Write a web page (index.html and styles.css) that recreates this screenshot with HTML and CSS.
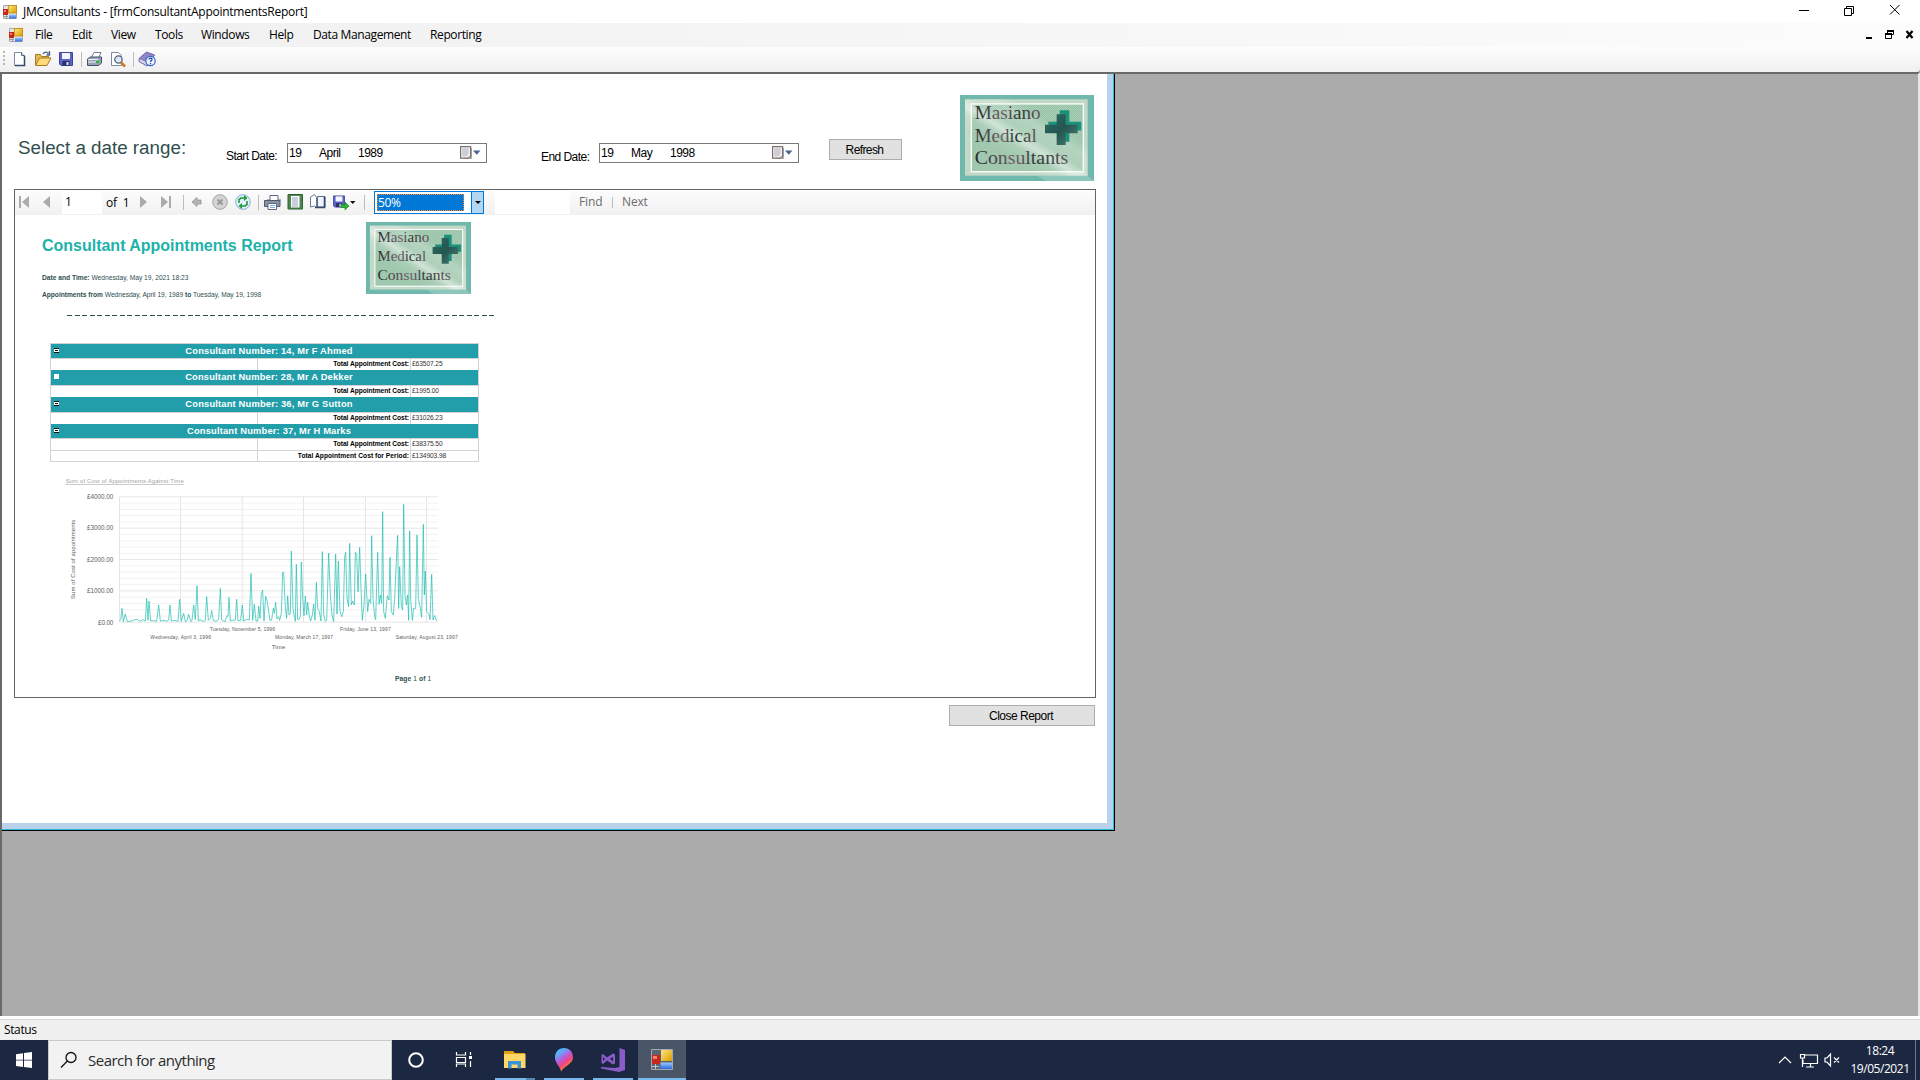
FILE: index.html
```html
<!DOCTYPE html>
<html lang="en">
<head>
<meta charset="utf-8">
<title>JMConsultants</title>
<link rel="stylesheet" href="styles.css">
</head>
<body>
<svg class="defs" width="0" height="0" aria-hidden="true">
  <defs>
    <linearGradient id="gGold" x1="0" y1="0" x2="1" y2="1"><stop offset="0" stop-color="#ffe680"/><stop offset="1" stop-color="#dc9c00"/></linearGradient>
    <linearGradient id="gBlue" x1="0" y1="0" x2="0" y2="1"><stop offset="0" stop-color="#9cc8ff"/><stop offset="1" stop-color="#2a6ce0"/></linearGradient>
    <linearGradient id="gShine" x1="0" y1="1" x2="1" y2="0"><stop offset=".3" stop-color="#fff" stop-opacity="0"/><stop offset=".4" stop-color="#fff" stop-opacity=".12"/><stop offset=".46" stop-color="#fff" stop-opacity=".5"/><stop offset=".53" stop-color="#fff" stop-opacity=".15"/><stop offset=".62" stop-color="#fff" stop-opacity=".22"/><stop offset=".7" stop-color="#fff" stop-opacity="0"/></linearGradient>
    <linearGradient id="gText" x1="0" y1="0" x2="1" y2="0"><stop offset="0" stop-color="#262a2a"/><stop offset=".45" stop-color="#75636f"/><stop offset=".65" stop-color="#2d3434"/><stop offset="1" stop-color="#64585f"/></linearGradient>
    <linearGradient id="gCross" x1="0" y1="0" x2="1" y2="1"><stop offset="0" stop-color="#2f6d66"/><stop offset=".5" stop-color="#245650"/><stop offset="1" stop-color="#4c7f76"/></linearGradient>
    <pattern id="pDots" width="6" height="6" patternUnits="userSpaceOnUse"><rect width="6" height="6" fill="#add0b8"/><path d="M0 0h3v3H0zM3 3h3v3H3z" fill="#93c0a4"/></pattern>
    <linearGradient id="gPaint" x1="0" y1="0" x2=".6" y2="1"><stop offset="0" stop-color="#1fd3f4"/><stop offset=".3" stop-color="#6aa2f5"/><stop offset=".5" stop-color="#b55fe0"/><stop offset=".72" stop-color="#f0457d"/><stop offset="1" stop-color="#ffb400"/></linearGradient>
    <symbol id="form" viewBox="0 0 14 14">
      <path d="M.5.5h13v13H.5z" fill="#e4e4e4" stroke="#a8a8a8"/><path d="M3.500 10v4M0 11.500h5" stroke="#999"/>
      <rect y="4" width="5" height="6" fill="#c8281c"/><rect x="1" y="5" width="2" height="2" fill="#f08070"/>
      <rect x="5.500" y=".5" width="8" height="7.500" fill="url(#gGold)" stroke="#c08a10" stroke-width=".8"/>
      <rect x="6" y="9.500" width="7" height="4" fill="url(#gBlue)"/>
    </symbol>
    <symbol id="formLarge" viewBox="0 0 22 21" preserveAspectRatio="none">
      <path d="M.5.5h21v20H.5z" fill="#5a6474" stroke="#a3a8b0"/><path d="M4.500 15v5M1 17.500h7" stroke="#c0c4ca"/>
      <rect x="1" y="6" width="8" height="9" fill="#c8281c"/><rect x="2" y="7" width="4" height="3" fill="#f08070"/>
      <rect x="10" y="1" width="11" height="11" fill="url(#gGold)"/>
      <rect x="9.500" y="13.500" width="11.500" height="6.500" fill="url(#gBlue)"/>
    </symbol>
    <symbol id="floppy" viewBox="0 0 14 14">
      <path d="M.5.5h13v13H2l-1.500-1.500z" fill="#5b62c8" stroke="#3d449c"/><rect x="3" y="1" width="8" height="6" fill="#f4f6ff"/><rect x="3.500" y="9" width="7" height="4.500" fill="#2b2f68"/><rect x="7.500" y="10" width="2" height="3" fill="#dfe4ff"/>
    </symbol>
    <symbol id="logo" viewBox="0 0 402 260" preserveAspectRatio="none">
      <rect width="402" height="260" fill="#70b8ac"/>
      <rect x="15" y="13" width="368" height="231" fill="#c3d9c8"/>
      <rect x="34" y="27" width="336" height="205" fill="url(#pDots)"/>
      <path d="M15 13h368v231H15z" fill="url(#gShine)"/>
      <path d="M230 244h153l19 16H260z" fill="#fff" fill-opacity=".2"/>
      <rect x="34" y="27" width="336" height="205" fill="none" stroke="#fbfffc" stroke-width="4"/>
      <path d="M299 46h29v35h36v26h-36v34h-29v-34h-34V81h34z" fill="#1c9179"/>
      <path d="M290 58h27v32h36v26h-36v35h-27v-35h-35V90h35z" fill="url(#gCross)"/>
      <g font-family="'Liberation Serif',serif" font-size="55" fill="url(#gText)">
        <text x="44" y="72" textLength="198" lengthAdjust="spacingAndGlyphs">Masiano</text>
        <text x="44" y="142" textLength="186" lengthAdjust="spacingAndGlyphs">Medical</text>
        <text x="44" y="208" textLength="281" lengthAdjust="spacingAndGlyphs">Consultants</text>
      </g>
    </symbol>
    <symbol id="calendar" viewBox="0 0 21 14">
      <path d="M2 2h10v11H4z" fill="#aaa"/><path d="M.6.600h10v9.500l-2 2h-8z" fill="#f5f2f2" stroke="#7b706f" stroke-width="1.200"/>
      <path d="M2.500 3h6.500M2.500 5h6.500M2.500 7h6.500M2.500 9h5M3 2.500v8M5 2.500v8M7 2.500v8" stroke="#aeb6c4" stroke-width=".7"/>
      <path d="M13 4.500h7.500L16.700 8.700z" fill="#48648f"/>
    </symbol>
  </defs>
</svg>

<div class="app">
  <header class="titlebar">
    <svg class="ico14"><use href="#form"/></svg>
    <span class="app-title">JMConsultants - [frmConsultantAppointmentsReport]</span>
    <svg class="window-buttons" width="104" height="14" fill="none" stroke="#000"><path d="M1 6.500h10M46.500 4.500h7v7h-7zM48.500 4v-1.500h7v7H54M92 1l9.500 9.500M101.500 1L92 10.500"/></svg>
  </header>

  <nav class="menubar">
    <svg class="ico14"><use href="#form"/></svg>
    <span class="m-file">File</span><span class="m-edit">Edit</span><span class="m-view">View</span><span class="m-tools">Tools</span><span class="m-windows">Windows</span><span class="m-help">Help</span><span class="m-data">Data Management</span><span class="m-reporting">Reporting</span>
    <svg class="child-buttons" width="48" height="12"><path d="M0 8h6v2H0z"/><path d="M21.500 1.500h6v4h-6zM19.500 5.500h6v4h-6z" fill="#fbfbfb" stroke="#000"/><path d="M21 1h7v2h-7zM19 4h7v2h-7z"/><path d="M40.500 2l6 7M46.500 2l-6 7" stroke="#000" stroke-width="2.200"/></svg>
  </nav>

  <div class="toolbar">
    <svg width="160" height="24">
      <path d="M3 4h2v2H3zM3 8h2v2H3zM3 12h2v2H3zM3 16h2v2H3z" fill="#b8b8b8"/>
      <path d="M14.500 5.500h7l3 3v10h-10z" fill="#fff" stroke="#7c8aa6"/><path d="M24.500 9v9.500H15" stroke="#34496f" stroke-width="1.500" fill="none"/><path d="M21.500 5.500v3h3" fill="#dfe8f5" stroke="#50658a"/>
      <path d="M35.500 18V7.500h5l1 2h7V12" fill="#e5bb55" stroke="#a57b28"/><path d="M35.500 18.500l4-7.500h11.500l-4 7.500z" fill="#ffda78" stroke="#a57b28"/><path d="M43 7c1-2.500 4-2.500 5.500-.5M49.500 4v4h-3" stroke="#475f82" fill="none" stroke-width="1.300"/>
      <svg x="59" y="5" width="14" height="14"><use href="#floppy"/></svg>
      <path d="M81.500 5v15M133.500 5v15" stroke="#bdbdbd"/>
      <path d="M91 11l3-5.500h7L98.500 11z" fill="#fff" stroke="#7080a0"/><path d="M87.500 12l3-2h11v6l-3 2.500h-11z" fill="#98a4b6" stroke="#43506a"/><path d="M88 12.500h10M88 15h10" stroke="#edf1f6"/><rect x="96" y="14" width="3" height="2" fill="#1fc02f"/>
      <path d="M111.500 5.500h7l3 3v10h-10z" fill="#fff" stroke="#7c8aa6"/><circle cx="118.500" cy="12.500" r="3.700" fill="#d8e6f7" fill-opacity=".9" stroke="#54647e" stroke-width="1.300"/><path d="M121 15.500l4 4" stroke="#d07a22" stroke-width="2.600"/>
      <path d="M139 11.500l7.500-6.500 8 3-6 8.500z" fill="#8e88c8" stroke="#6a66a8"/><path d="M139 12v2.500l8 4.500 2-3" fill="#d9d7ee" stroke="#6a66a8"/><circle cx="150.500" cy="14" r="4.700" fill="#eaf1ff" stroke="#3d67c4" stroke-width="1.200"/><path d="M149 12.500c.2-1.800 3.200-1.600 3 0-.2 1.100-1.500 1-1.500 2.500M150.500 16v1.200" stroke="#2448a0" stroke-width="1.300" fill="none"/>
    </svg>
  </div>

  <main class="mdi">
    <section class="child">
      <div class="filters">
        <h2>Select a date range:</h2>
        <label class="start-label">Start Date:</label>
        <div class="picker start-picker"><span class="day">19</span><span class="month">April</span><span class="year">1989</span><svg width="21" height="14"><use href="#calendar"/></svg></div>
        <label class="end-label">End Date:</label>
        <div class="picker end-picker"><span class="day">19</span><span class="month">May</span><span class="year">1998</span><svg width="21" height="14"><use href="#calendar"/></svg></div>
        <button class="btn refresh">Refresh</button>
        <svg class="logo-big"><use href="#logo"/></svg>
      </div>

      <div class="viewer">
        <div class="viewer-bar">
          <svg width="47" height="25" fill="#ababab"><path d="M4 6h2v12H4zM14 6v12l-7-6zM35 6v12l-7-6z"/></svg>
          <span class="page-box">1</span>
          <span class="page-of">of&nbsp; 1</span>
          <svg class="bar-icons" width="233" height="25">
            <path d="M14 6v12l7-6zM35 6v12l7-6zM43 6h2v12h-2z" fill="#ababab"/>
            <path d="M57.500 5v15M132.500 5v15M238.500 5v15" stroke="#bdbdbd"/>
            <path d="M66 12l5-4.500v2.500h4v4h-4v2.500z" fill="#b5b5b5" stroke="#929292" stroke-width=".8"/>
            <circle cx="94" cy="12" r="7.300" fill="#d4d4d4" stroke="#a4a4a4"/><path d="M91.500 9.500l5 5M96.500 9.500l-5 5" stroke="#999" stroke-width="2"/>
            <circle cx="117" cy="12" r="7.300" fill="#e4f2ff" stroke="#86aedb"/><path d="M113 13V9.500l2-1.500h4M121 11v3.500l-2 1.500h-4" fill="none" stroke="#219a33" stroke-width="1.600"/><path d="M118 5l3.500 3-3.500 3zM116 13l-3.500 3 3.500 3z" fill="#219a33"/>
            <path d="M141 10h3V5.500h8V10h3" fill="#fff" stroke="#5b6a82"/><path d="M138.500 10.500h15.500v6h-15.500z" fill="#8a93a3" stroke="#505b6d"/><path d="M142 13.500h8.500v6H142z" fill="#fff" stroke="#5b6a82"/><path d="M144 15.500h5M144 17.500h5" stroke="#79afe6"/>
            <path d="M162 4.500h14.500v14.500H162z" fill="#4e8751" stroke="#2d6332"/><path d="M165 6h8.500v11.500H165z" fill="#fff"/><path d="M166 8h6M166 10h6M166 12h6M166 14h6M166 16h6" stroke="#7a88a8" stroke-width=".8"/>
            <path d="M184.500 7l4-2.500 2 3v10l-2-1.500-4 1z" fill="#fff" stroke="#6d7b94"/><path d="M191.500 6.500h7.500v10.500h-7.500z" fill="#eef4ff" stroke="#5b6a82"/><path d="M198.500 7v10.500H189" stroke="#35496d" stroke-width="1.600" fill="none"/>
            <svg x="207" y="5" width="12" height="13"><use href="#floppy"/></svg><path d="M215 14.500h4V12l4 4-4 4v-2.500h-4z" fill="#2cb52e" stroke="#188020" stroke-width=".6"/>
            <path d="M224 11h5.500l-2.750 3z" fill="#111"/>
          </svg>
          <div class="zoom-box"><span class="zoom-value">50%</span><span class="zoom-drop"></span></div>
          <span class="find-box"></span>
          <span class="find">Find</span><span class="find-sep"></span><span class="next">Next</span>
        </div>

        <article class="report">
          <div class="report-head">
            <div class="report-info">
              <h1>Consultant Appointments Report</h1>
              <p class="date-line"><b>Date and Time:</b> Wednesday, May 19, 2021 18:23</p>
              <p class="range-line"><b>Appointments from</b> Wednesday, April 19, 1989 <b>to</b> Tuesday, May 19, 1998</p>
            </div>
            <svg class="logo-small"><use href="#logo"/></svg>
          </div>
          <svg class="dashes" width="428" height="1"><path d="M0 .5h428" stroke="#2f4f4f" stroke-dasharray="5 2.540" shape-rendering="crispEdges"/></svg>
          <div class="costs">
            <div class="group g1"><i class="toggle"></i>Consultant Number: 14, Mr F Ahmed</div>
            <div class="row"><span></span><b>Total Appointment Cost:</b><em>£63507.25</em></div>
            <div class="group g2"><i class="toggle blank"></i>Consultant Number: 28, Mr A Dekker</div>
            <div class="row"><span></span><b>Total Appointment Cost:</b><em>£1995.00</em></div>
            <div class="group g3"><i class="toggle"></i>Consultant Number: 36, Mr G Sutton</div>
            <div class="row"><span></span><b>Total Appointment Cost:</b><em>£31026.23</em></div>
            <div class="group g4"><i class="toggle"></i>Consultant Number: 37, Mr H Marks</div>
            <div class="row"><span></span><b>Total Appointment Cost:</b><em>£38375.50</em></div>
            <div class="row total"><span></span><b>Total Appointment Cost for Period:</b><em>£134903.98</em></div>
          </div>
          <svg class="chart" viewBox="0 0 1290 600" width="430" height="200">
            <path class="minor" d="M238 114.500h956M238 133.500h956M238 152h956M238 171h956M238 208.500h956M238 227.500h956M238 246h956M238 265h956M238 302.500h956M238 321h956M238 340h956M238 359h956M238 396.500h956M238 415.500h956M238 434h956M238 453h956"/>
            <path class="major" d="M238 95.500h956M238 189.500h956M238 283.500h956M238 377.500h956M238 471.500h956M238.500 95v376M421.500 95v376M606.500 95v376M790.500 95v376M976.500 95v376M1159.500 95v376"/>
            <polyline class="series" points="238,468 242,464 246,430 250,470 256,447 262,470 275,468 285,464 292,463 300,469 308,464 316,468 320,400 324,466 327,408 332,468 340,467 350,469 356,420 361,468 372,466 380,469 386,465 390,420 394,468 402,466 414,469 419,403 424,469 431,445 436,470 441,467 446,448 452,470 456,466 461,420 466,464 471,362 475,468 480,464 490,469 496,466 500,395 505,466 511,460 515,436 520,466 528,469 536,463 541,370 545,465 555,470 561,452 564,454 567,397 571,468 580,465 586,466 590,403 594,467 602,466 607,420 611,468 620,463 628,465 633,325 638,466 643,418 648,468 653,468 656,424 660,460 664,385 668,376 672,468 677,394 681,405 686,440 690,466 695,465 700,430 703,445 707,412 711,462 716,455 719,466 724,445 728,322 731,322 736,430 740,460 743,392 747,450 751,445 754,258 759,430 763,455 766,469 769,298 773,464 778,462 781,455 784,291 788,400 792,452 796,393 800,450 803,412 808,455 812,468 817,450 821,417 825,466 829,352 833,430 838,440 843,468 847,260 851,450 856,469 860,465 866,264 871,390 876,450 881,470 887,267 891,447 895,288 900,440 905,455 910,440 914,275 917,262 921,400 926,425 929,235 934,420 938,408 943,420 946,262 950,268 954,380 959,247 963,370 967,466 972,420 977,327 983,440 987,403 992,415 995,212 999,400 1004,455 1007,464 1013,262 1017,418 1021,390 1025,415 1028,140 1031,440 1036,460 1042,392 1047,405 1050,277 1054,440 1060,450 1064,400 1071,245 1073,211 1076,430 1079,305 1084,425 1088,435 1091,118 1095,390 1099,420 1103,390 1106,466 1109,198 1112,400 1117,466 1121,430 1127,430 1131,210 1135,400 1141,430 1145,457 1150,178 1153,390 1156,318 1160,440 1166,445 1170,464 1175,328 1179,465 1184,452 1189,466 1192,464"/>
            <text class="chart-title" x="77" y="55" textLength="354">Sum of Cost of Appointments Against Time</text>
            <path d="M77 58.500h354" stroke="#b0b0b0" stroke-width="2"/>
            <g class="y-labels"><text x="141" y="102" textLength="79">£4000.00</text><text x="141" y="196" textLength="79">£3000.00</text><text x="141" y="290" textLength="79">£2000.00</text><text x="141" y="384" textLength="79">£1000.00</text><text x="174" y="479" textLength="46">£0.00</text></g>
            <text class="axis" transform="translate(105 402) rotate(-90)" textLength="238">Sum of Cost of appointments</text>
            <g class="x-labels"><text x="331" y="521" textLength="182">Wednesday, April 3, 1996</text><text x="509" y="497" textLength="196">Tuesday, November 5, 1996</text><text x="705" y="521" textLength="174">Monday, March 17, 1997</text><text x="900" y="497" textLength="152">Friday, June 13, 1997</text><text x="1067" y="521" textLength="186">Saturday, August 23, 1997</text></g>
            <text class="axis" x="695" y="553" textLength="41">Time</text>
          </svg>
          <p class="page-no"><b>Page</b> 1 <b>of</b> 1</p>
        </article>
      </div>
      <button class="btn close-report">Close Report</button>
    </section>
  </main>

  <div class="statusbar">Status</div>

  <footer class="taskbar">
    <svg class="start" width="48" height="40" fill="#fff"><path d="M16 14.300l7-1v6.400h-7zM24 13.100l8-1.100v7.700h-8zM16 20.600h7v6.300l-7-1zM24 20.600h8V28l-8-1.100z"/></svg>
    <div class="search"><svg width="18" height="18" fill="none" stroke="#111" stroke-width="1.300"><circle cx="11" cy="6.500" r="5"/><path d="M7.400 10L1 16.500"/></svg><span>Search for anything</span></div>
    <svg class="tasks" width="300" height="40">
      <circle cx="24" cy="20" r="6.800" fill="none" stroke="#fff" stroke-width="2"/>
      <path d="M64.500 12v3h9v-3M64.500 27v-3h9v3M64.500 17.500h9v5h-9zM78.500 12v3M78.500 21v6" fill="none" stroke="#fff" stroke-width="1.200"/><path d="M77 16h3v3h-3z" fill="#fff"/>
      <path d="M112 11h9l2 2h10v15h-21z" fill="#e3a112"/><path d="M112 14h21.500v14H112z" fill="#ffd766"/><path d="M116 28.500v-7.500h13v7.500h-3.500v-4h-6v4z" fill="#3994d6"/>
      <path d="M169 31.500c-.5-5-6-8-6-14C163 12 166.500 8 172 8s9 4 9 9.500c0 6-8.500 8.500-12 14z" fill="url(#gPaint)"/>
      <path d="M227.500 8l5.500 2v20l-6 2-18-3.500v-1.500l14 1 4.500-1z" fill="#8a5cc8"/><path d="M211 14l4 3.500 6-4 2 1v9l-2 1-6-4-4 3.500-1.500-1v-8zM211 17v4l2-2zM221 16.800v4.400l-3-2.200z" fill="#8a5cc8" fill-rule="evenodd"/>
      <rect x="246" width="48" height="40" fill="#4a5567"/><svg x="259" y="9" width="22" height="21"><use href="#formLarge"/></svg>
      <path d="M103 38h31v2h-31zM152 38h40v2h-40zM201 38h40v2h-40zM246 38h48v2h-48z" fill="#76b9ed"/><path d="M134 38h9v2h-9z" fill="#5788b2"/>
    </svg>
    <svg class="tray" width="68" height="20" fill="none" stroke="#fff" stroke-width="1.200"><path d="M2 13l6-6 6 6M28 5h12.500v8.500H26V10M33.500 14v3M29 17h8M23.500 4.500h4v3.500h-4zM25.500 8v9M48 8h2l3.500-4v12L50 12h-2zM57 7.500l5 5M62 7.500l-5 5"/></svg>
    <div class="clock"><span class="time">18:24</span><span class="date">19/05/2021</span></div>
    <i class="show-desktop"></i>
  </footer>
</div>
</body>
</html>
```
FILE: styles.css
```css
* { box-sizing: border-box; }
body { margin: 0; background: #ababab; font-family: "Open Sans", "Noto Sans", sans-serif; font-size: 12px; color: #000; }
h1, h2, p { margin: 0; font-weight: normal; }
svg { display: block; flex: none; }
span, label, b, em { white-space: nowrap; }
.defs { position: absolute; }
.ico14 { width: 14px; height: 14px; }

.app { width: 1920px; height: 1080px; display: flex; flex-direction: column; overflow: hidden; }

.titlebar { height: 23px; background: #fff; display: flex; align-items: center; padding: 0 20px 0 3px; }
.app-title { margin-left: 6px; letter-spacing: -.25px; line-height: 23px; }
.window-buttons { margin: -2px -2px 0 auto; }

.menubar { height: 24px; background: linear-gradient(90deg, #f0f0f0, #fcfcfc); display: flex; align-items: center; padding: 0 7px 0 9px; letter-spacing: -.38px; line-height: 24px; }
.m-file { margin-left: 12px; width: 37px; }
.m-edit { width: 39px; }
.m-view { width: 44px; }
.m-tools { width: 46px; }
.m-windows { width: 68px; }
.m-help { width: 44px; }
.m-data { width: 117px; }
.child-buttons { margin-left: auto; margin-right: -1px; }

.toolbar { height: 25px; background: linear-gradient(#fdfdfd, #f0f0f0); border-radius: 0 0 4px 0; }

.mdi { flex: none; height: 944px; background: #ababab; border-style: solid; border-color: #696969 #e8e8e8 #ababab #696969; border-width: 2px 2px 0 2px; }
.child { width: 1113px; height: 757px; background: #fff; border-style: solid; border-color: #000; border-width: 0 1px 1px 0; box-shadow: inset -1px -1px #30b8d8, inset -7px -7px #b9d1ea; overflow: hidden; }

.filters { height: 115px; display: flex; align-items: flex-start; font-family: "Liberation Sans", sans-serif; font-size: 12px; }
.filters h2 { margin: 62px 0 0 16px; width: 208px; font-size: 18.8px; line-height: 24px; color: #2f4f4f; white-space: nowrap; }
.start-label { margin-top: 75px; width: 61px; line-height: 15px; letter-spacing: -.58px; }
.end-label { margin: 75px 0 0 54px; width: 58px; line-height: 16px; letter-spacing: -.55px; }
.picker { margin-top: 69px; width: 200px; height: 20px; border: 1px solid #7a7a7a; display: flex; align-items: center; padding: 0 5px 0 1px; letter-spacing: -.5px; }
.picker svg { margin-left: auto; }
.day { width: 30px; }
.month { width: 39px; }
.btn { border: 1px solid #adadad; background: #e1e1e1; padding: 0; color: #000; font: 12px "Liberation Sans", sans-serif; letter-spacing: -.6px; }
.refresh { margin: 65px 0 0 30px; width: 73px; height: 21px; padding-right: 2px; }
.logo-big { width: 134px; height: 86px; margin: 21px 0 0 58px; }

.viewer { margin-left: 12px; width: 1082px; height: 509px; border: 1px solid #646464; }
.viewer-bar { height: 25px; background: linear-gradient(#fdfdfd, #f0f0f0); display: flex; align-items: center; line-height: 24px; }
.page-box { width: 40px; height: 23px; background: #fff; padding-left: 3px; line-height: 22px; }
.page-of { margin-left: 4px; width: 20px; letter-spacing: -.2px; line-height: 23px; margin-top: -1px; }
.bar-icons { overflow: visible; }
.zoom-box { margin-left: 15px; width: 110px; height: 23px; border: 1px solid #0078d7; background: #fff; display: flex; align-items: center; }
.zoom-value { margin-left: 2px; width: 87px; height: 17px; background: #0078d7; border: 1px dotted #ff8728; color: #fff; line-height: 15px; letter-spacing: -.3px; }
.zoom-drop { margin-left: auto; width: 12px; height: 21px; background: #b3d7f3; border-left: 1px solid #0078d7; display: flex; align-items: center; justify-content: center; }
.zoom-drop::after { content: ""; border: 3px solid transparent; border-top-color: #000; border-bottom: 0; }
.find-box { margin-left: 11px; width: 75px; height: 23px; background: #fff; }
.find, .next { color: #6d6d6d; letter-spacing: -.15px; margin-top: -1px; }
.find { margin-left: 9px; width: 33px; }
.find-sep { width: 1px; height: 11px; background: #bdbdbd; }
.next { margin-left: 9px; }

.report { font-family: "Liberation Sans", sans-serif; color: #2f4f4f; }
.report-head { display: flex; height: 99px; }
.report-info { width: 351px; padding-left: 27px; }
.report h1 { margin-top: 21px; font-size: 16px; font-weight: bold; line-height: 20px; color: #20b2aa; white-space: nowrap; letter-spacing: -.01px; }
.date-line, .range-line { font-size: 6.67px; line-height: 12px; white-space: nowrap; }
.date-line { margin-top: 15.500px; }
.range-line { margin-top: 5px; letter-spacing: -.025px; }
.logo-small { width: 105px; height: 72px; margin-top: 7px; }
.dashes { margin-left: 52px; margin-top: 1px; }

.costs { margin: 27px 0 0 35px; width: 429px; border: 1px solid #d3d3d3; color: #000; }
.group { position: relative; background: #219eaa; color: #fff; font-size: 9.33px; font-weight: bold; text-align: center; letter-spacing: .18px; padding-left: 9px; }
.toggle { position: absolute; left: 3px; top: 4px; width: 5px; height: 5px; background: #fff; border: solid #111; border-width: 1px 0; }
.toggle::after { content: ""; display: block; width: 3px; height: 1px; margin: 1px; background: #111; }
.toggle.blank { border-color: #fff; }
.toggle.blank::after { background: #fff; }
.g1 { height: 14px; line-height: 14px; }
.g2, .g3 { height: 15px; line-height: 14px; }
.g4 { height: 14px; line-height: 14px; }
.row { display: grid; grid-template-columns: 206px 154px 1fr; height: 12px; font-size: 6.67px; line-height: 9px; border-top: 1px solid #d3d3d3; }
.row b { border: solid #d3d3d3; border-width: 0 1px; text-align: right; padding-right: 1px; letter-spacing: -.05px; }
.row em { font-style: normal; color: #333; padding-left: 1px; letter-spacing: -.1px; }
.row.total { height: 11px; }
.row.total b { letter-spacing: .03px; }

.chart { margin: 3px 0 0 25px; font-family: "Liberation Sans", sans-serif; fill: #777; }
.minor { stroke: #f2f2f2; stroke-width: 3; }
.major { stroke: #e6e6e6; stroke-width: 3; fill: none; }
.series { fill: none; stroke: #20bdb2; stroke-width: 2.100; stroke-linejoin: round; }
.chart-title { font-size: 17.500px; fill: #a0a0a0; }
.y-labels { font-size: 19px; fill: #5e5e5e; }
.axis { font-size: 18px; fill: #5e5e5e; }
.x-labels { font-size: 15px; fill: #5e5e5e; }
.page-no { margin: 8px 0 0 380px; font-size: 6.67px; line-height: 12px; letter-spacing: .1px; }

.close-report { display: block; margin: 7px 0 0 947px; width: 146px; height: 21px; padding-right: 2px; letter-spacing: -.5px; }

.statusbar { height: 24px; background: #f0f0f0; border-top: 3px solid #fff; box-shadow: inset 0 1px #d7d7d7; padding-left: 4px; line-height: 21px; letter-spacing: -.38px; }

.taskbar { height: 40px; background: #1c2842; display: flex; align-items: center; color: #fff; }
.search { width: 344px; height: 40px; background: #f2f2f2; border: 1px solid #c8c8c8; display: flex; align-items: center; padding-left: 11px; font-size: 15px; color: #2b2b2b; }
.search span { margin-left: 10px; letter-spacing: -.5px; }
.tray { margin-left: auto; margin-right: 3px; }
.clock { width: 64px; display: flex; flex-direction: column; align-items: center; line-height: 18px; letter-spacing: -.45px; }
.show-desktop { width: 1px; height: 40px; background: #6d7687; margin: 0 4px 0 3px; }
```
